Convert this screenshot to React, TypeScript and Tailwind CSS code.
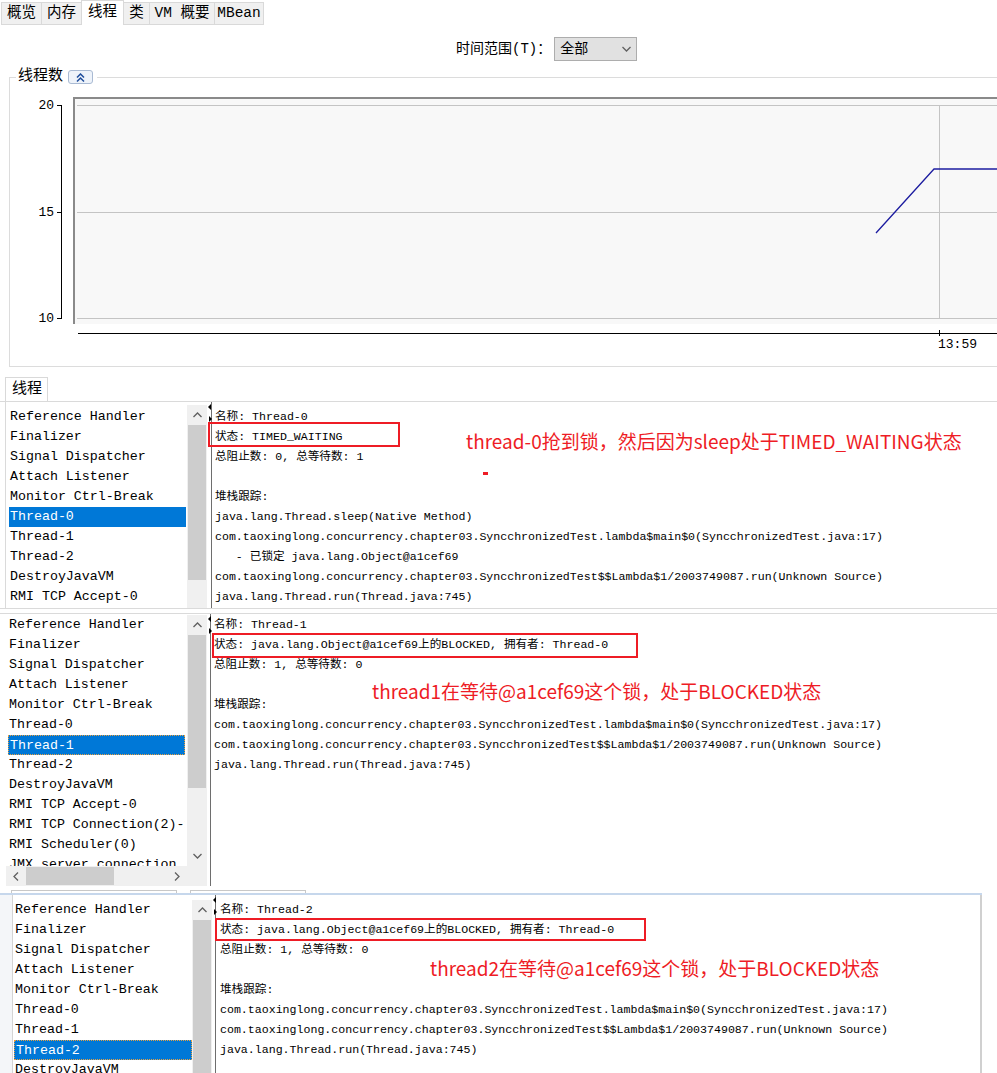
import React from 'react';

const mono = "font-['Liberation_Mono','Noto_Sans_CJK_SC',monospace]";
const detailFont = "font-['Liberation_Mono','Noto_Sans_CJK_SC',monospace] text-[11.6px]";
const note = "font-['Noto_Sans_CJK_SC','Noto_Sans',sans-serif] text-[19px] leading-[24px] text-[#ee1c25] whitespace-nowrap";

const threads = [
  'Reference Handler',
  'Finalizer',
  'Signal Dispatcher',
  'Attach Listener',
  'Monitor Ctrl-Break',
  'Thread-0',
  'Thread-1',
  'Thread-2',
  'DestroyJavaVM',
  'RMI TCP Accept-0',
  'RMI TCP Connection(2)-192.168.1.5',
  'RMI Scheduler(0)',
  'JMX server connection timeout 15',
];

const trace1 = 'com.taoxinglong.concurrency.chapter03.SyncchronizedTest.lambda$main$0(SyncchronizedTest.java:17)';
const trace2 = 'com.taoxinglong.concurrency.chapter03.SyncchronizedTest$$Lambda$1/2003749087.run(Unknown Source)';
const trace3 = 'java.lang.Thread.run(Thread.java:745)';

const s1Lines = [
  '名称: Thread-0',
  '状态: TIMED_WAITING',
  '总阻止数: 0, 总等待数: 1',
  '',
  '堆栈跟踪:',
  'java.lang.Thread.sleep(Native Method)',
  trace1,
  '   - 已锁定 java.lang.Object@a1cef69',
  trace2,
  trace3,
];

const blocked = (n: string) => [
  `名称: ${n}`,
  '状态: java.lang.Object@a1cef69上的BLOCKED, 拥有者: Thread-0',
  '总阻止数: 1, 总等待数: 0',
  '',
  '堆栈跟踪:',
  trace1,
  trace2,
  trace3,
];

function Chevron({ dir }: { dir: 'up' | 'down' | 'left' | 'right' }) {
  const pts = {
    up: '0.5,5 4.5,1 8.5,5',
    down: '0.5,1 4.5,5 8.5,1',
    left: '5,0.5 1,4.5 5,8.5',
    right: '1,0.5 5,4.5 1,8.5',
  }[dir];
  const vertical = dir === 'up' || dir === 'down';
  return (
    <svg width={vertical ? 9 : 6} height={vertical ? 6 : 9}>
      <polyline points={pts} fill="none" stroke="#606060" strokeWidth="1.3" />
    </svg>
  );
}

function ThreadList({ selected, focus, count }: { selected: string; focus?: boolean; count: number }) {
  return (
    <div className={`h-full overflow-hidden ${mono} text-[13.3px] text-black`}>
      {threads.slice(0, count).map((t) => (
        <div
          key={t}
          className={`h-[20px] leading-[20px] pl-[1px] whitespace-nowrap overflow-hidden ${
            t === selected ? 'bg-[#0078d7] text-white' : ''
          } ${t === selected && focus ? 'border border-dotted border-[#e8a040] leading-[18px]' : ''}`}
        >
          {t}
        </div>
      ))}
    </div>
  );
}

function VScroll({ thumb, down, top }: { thumb: number | null; down?: boolean; top: string }) {
  return (
    <div className={`w-[20px] flex flex-col bg-[#f0f0f0] ${top}`}>
      <div className="h-[20px] flex items-center justify-center">
        <Chevron dir="up" />
      </div>
      {thumb === null ? (
        <div className="flex-1 bg-[#cdcdcd] mx-[1px]" />
      ) : (
        <>
          <div className="bg-[#cdcdcd] mx-[1px]" style={{ height: thumb }} />
          <div className="flex-1" />
        </>
      )}
      {down && (
        <div className="h-[20px] flex items-center justify-center">
          <Chevron dir="down" />
        </div>
      )}
    </div>
  );
}

function Splitter({ w }: { w: string }) {
  return (
    <div className={`${w} border-r border-[#6e6e6e] bg-white`}>
      <svg width="5" height="24" className="block">
        <polygon points="4,2 1,5 4,8" fill="#000" />
        <polygon points="2,14 5,17 2,20" fill="#000" />
      </svg>
    </div>
  );
}

function Details({ lines, pad }: { lines: string[]; pad: string }) {
  return (
    <div className={`flex-1 overflow-hidden ${detailFont} text-black ${pad}`}>
      {lines.map((l, i) => (
        <div key={i} className="h-[20px] leading-[20px] whitespace-pre">
          {l}
        </div>
      ))}
    </div>
  );
}

function ThreadChart() {
  return (
    <svg width="987" height="288" className="block">
      <g fontFamily="Liberation Mono, monospace" fontSize="13" fill="#000">
        <text x="44" y="31" textAnchor="end">20</text>
        <text x="44" y="138" textAnchor="end">15</text>
        <text x="44" y="244" textAnchor="end">10</text>
        <text x="928" y="270">13:59</text>
      </g>
      <line x1="51.5" y1="27" x2="51.5" y2="241" stroke="#000" />
      <line x1="47" y1="27.5" x2="52" y2="27.5" stroke="#000" />
      <line x1="47" y1="134.5" x2="52" y2="134.5" stroke="#000" />
      <line x1="47" y1="240.5" x2="52" y2="240.5" stroke="#000" />
      <rect x="63" y="19" width="930" height="227" fill="#f8f8f8" />
      <line x1="63" y1="20" x2="987" y2="20" stroke="#8a8a8a" strokeWidth="2" />
      <line x1="64" y1="19" x2="64" y2="246" stroke="#8a8a8a" strokeWidth="2" />
      <line x1="67" y1="27.5" x2="987" y2="27.5" stroke="#c4c4c4" />
      <line x1="67" y1="134.5" x2="987" y2="134.5" stroke="#c4c4c4" />
      <line x1="67" y1="240.5" x2="987" y2="240.5" stroke="#c4c4c4" />
      <line x1="929.5" y1="27" x2="929.5" y2="240" stroke="#c4c4c4" />
      <line x1="68" y1="255.5" x2="987" y2="255.5" stroke="#000" />
      <line x1="929.5" y1="252" x2="929.5" y2="258" stroke="#000" />
      <polyline points="866,155 924,91 987,91" fill="none" stroke="#1c1ca0" strokeWidth="1.3" />
    </svg>
  );
}

function Tab({ label, w, active }: { label: string; w: string; active?: boolean }) {
  return (
    <div
      className={`${w} -ml-px flex items-center justify-center border border-[#d9d9d9] ${mono} text-[14.5px] ${
        active ? 'h-[25px] bg-white border-b-0' : 'h-[23px] bg-[#f0f0f0]'
      }`}
    >
      {label}
    </div>
  );
}

export default function App() {
  return (
    <div className="w-[997px] h-[1073px] overflow-hidden bg-white text-black">
      {/* top tabs */}
      <div className="flex items-end h-[25px] pl-[2px]">
        <Tab label="概览" w="w-[41px]" />
        <Tab label="内存" w="w-[41px]" />
        <Tab label="线程" w="w-[43px]" active />
        <Tab label="类" w="w-[27px]" />
        <Tab label="VM 概要" w="w-[66px]" />
        <Tab label="MBean" w="w-[50px]" />
      </div>

      {/* time range */}
      <div className="h-[52px] pt-[12px] pl-[456px]">
        <div className="flex items-center h-[24px]">
          <span className={`${mono} text-[14px]`}>时间范围(T)：</span>
          <div className="ml-[3px] w-[83px] h-[24px] bg-[#e1e1e1] border border-[#adadad] flex items-center justify-between pl-[5px] pr-[5px]">
            <span className={`${mono} text-[14px]`}>全部</span>
            <Chevron dir="down" />
          </div>
        </div>
      </div>

      {/* thread count group */}
      <div className="relative ml-[9px] w-[1000px] h-[290px] border border-[#dcdcdc]">
        <div className="absolute left-[6px] -top-[10px] h-[18px] flex items-center bg-white pl-[2px] pr-[4px] gap-[5px]">
          <span className={`${mono} text-[15px] leading-[18px]`}>线程数</span>
          <div className="w-[25px] h-[14px] rounded-[3px] border border-[#a9bad3] bg-[#eef3fa] flex items-center justify-center">
            <svg width="9" height="9">
              <polyline points="1,4.5 4.5,1 8,4.5" fill="none" stroke="#1f4e9c" strokeWidth="1.5" />
              <polyline points="1,8.5 4.5,5 8,8.5" fill="none" stroke="#1f4e9c" strokeWidth="1.5" />
            </svg>
          </div>
        </div>
        <ThreadChart />
      </div>

      {/* threads tab */}
      <div className="mt-[10px] h-[24px] flex">
        <div className={`ml-[5px] w-[43px] h-[24px] border border-b-0 border-[#d9d9d9] bg-white ${mono} text-[15px] leading-[23px] pl-[6px]`}>
          线程
        </div>
      </div>

      {/* section 1 */}
      <div className="relative h-[208px] flex border-t border-b border-[#dadada]">
        <div className="w-[6px] border-r border-[#dadada]" />
        <div className="w-[181px] pl-[3px] pr-[1px] pt-[5px]">
          <ThreadList selected="Thread-0" count={10} />
        </div>
        <VScroll thumb={155} top="mt-[3px]" />
        <Splitter w="w-[5px]" />
        <Details lines={s1Lines} pad="pl-[3px] pt-[5px]" />
        <div className="absolute left-[208px] top-[20px] w-[192px] h-[25px] border-2 border-[#ee1c25]" />
        <div className={`absolute left-[466px] top-[27px] ${note}`}>thread-0抢到锁，然后因为sleep处于TIMED_WAITING状态</div>
        <div className="absolute left-[483px] top-[70px] w-[5px] h-[3px] bg-[#ee1c25]" />
      </div>

      {/* section 2 */}
      <div className="relative h-[284px] flex flex-col">
        <div className="h-[4px]" />
        <div className="h-[273px] flex border-t border-[#dadada]">
          <div className="w-[6px]" />
          <div className="w-[201px] flex flex-col">
            <div className="h-[252px] flex">
              <div className="w-[181px] pl-[2px] pr-[2px] pt-[1px]">
                <ThreadList selected="Thread-1" focus count={13} />
              </div>
              <VScroll thumb={153} down top="mt-[1px]" />
            </div>
            <div className="h-[20px] flex items-center bg-[#f0f0f0]">
              <div className="w-[20px] flex justify-center">
                <Chevron dir="left" />
              </div>
              <div className="w-[88px] h-[18px] bg-[#cdcdcd]" />
              <div className="w-[53px]" />
              <div className="w-[20px] flex justify-center">
                <Chevron dir="right" />
              </div>
            </div>
          </div>
          <Splitter w="w-[4px]" />
          <Details lines={blocked('Thread-1')} pad="pl-[3px] pt-[1px]" />
        </div>
        <div className="h-[7px] flex items-end bg-white">
          <div className="ml-[11px] w-[166px] h-[3px] border border-b-0 border-[#c8c8c8]" />
          <div className="ml-[13px] w-[116px] h-[3px] border border-b-0 border-[#c8c8c8]" />
        </div>
        <div className="absolute left-[212px] top-[24px] w-[426px] h-[25px] border-2 border-[#ee1c25]" />
        <div className={`absolute left-[372px] top-[70px] ${note}`}>thread1在等待@a1cef69这个锁，处于BLOCKED状态</div>
      </div>

      {/* section 3 */}
      <div className="relative h-[180px] flex flex-col">
        <div className="h-[2px] w-[982px] bg-[#c6d7ec]" />
        <div className="h-[178px] w-[982px] flex border-r-2 border-[#d0d0d0]">
          <div className="w-[13px] bg-[#f4f6f9] border-r border-[#d4d4d4]" />
          <div className="w-[179px] pl-[1px] pt-[5px]">
            <ThreadList selected="Thread-2" focus count={9} />
          </div>
          <VScroll thumb={null} top="mt-[5px]" />
          <Splitter w="w-[4px]" />
          <Details lines={blocked('Thread-2')} pad="pl-[4px] pt-[5px]" />
        </div>
        <div className="absolute left-[215px] top-[25px] w-[431px] h-[23px] border-2 border-[#ee1c25]" />
        <div className={`absolute left-[430px] top-[63px] ${note}`}>thread2在等待@a1cef69这个锁，处于BLOCKED状态</div>
      </div>
    </div>
  );
}
